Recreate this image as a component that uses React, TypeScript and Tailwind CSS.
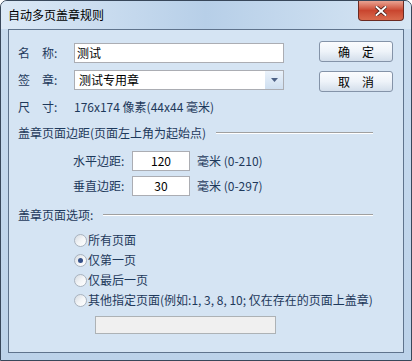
const font = { fontFamily: '"Noto Sans CJK SC", "Liberation Sans", sans-serif' };

function Radio({ label, checked }: { label: string; checked?: boolean }) {
  return (
    <div className="flex items-center h-[20px]">
      <span className="w-[13px] h-[13px] rounded-full border border-[#a9b3bf] bg-gradient-to-br from-[#d6dbe1] via-[#f2f4f6] to-[#ffffff] flex items-center justify-center">
        {checked && <span className="w-[5px] h-[5px] rounded-full bg-[#35518a]" />}
      </span>
      <span className="ml-[1px] text-[12px] text-[#1e395b]">{label}</span>
    </div>
  );
}

function Btn({ label }: { label: string }) {
  return (
    <button className="w-[74px] h-[21px] rounded-[3px] border border-[#8493a8] bg-gradient-to-b from-[#fbfcfe] via-[#eef3f9] to-[#d3deeb] text-[12px] text-black tracking-[12px] pl-[12px]">
      {label}
    </button>
  );
}

function Label({ a, b }: { a: string; b: string }) {
  return (
    <span className="w-[56px] flex">
      <span>{a}</span>
      <span className="ml-[12px]">{b}:</span>
    </span>
  );
}

export default function App() {
  return (
    <div style={font} className="w-[412px] h-[361px] bg-white">
      <div className="w-[412px] h-[361px] rounded-t-[7px] border border-[#38475a] bg-gradient-to-b from-[#c9dcef] to-[#bcd2e9] flex flex-col">
        {/* title bar */}
        <div className="h-[28px] flex items-start rounded-t-[6px] bg-gradient-to-r from-[#dce9f6] via-[#b7cfe8] to-[#d7e6f4]">
          <span className="ml-[7px] mt-[5px] text-[12px] text-black">自动多页盖章规则</span>
          <div className="ml-auto mr-[7px] w-[46px] h-[20px] rounded-b-[4px] border border-t-0 border-[#6b2a22] bg-gradient-to-b from-[#e8a292] via-[#c9452f] to-[#d96a4d] flex items-center justify-center">
            <svg width="12" height="10" viewBox="0 0 12 10">
              <path d="M1.5 1 L10.5 9 M10.5 1 L1.5 9" stroke="#3d1510" strokeWidth="3.4" strokeLinecap="square" />
              <path d="M1.5 1 L10.5 9 M10.5 1 L1.5 9" stroke="#ffffff" strokeWidth="2" strokeLinecap="square" />
            </svg>
          </div>
        </div>

        {/* client area */}
        <div className="mx-[7px] h-[324px] border border-[#5f738c] bg-[#d5e4f3] text-[12px] text-[#1e395b]">
          <div className="flex pt-[11px] pl-[9px]">
            <div className="flex flex-col">
              <div className="flex items-center h-[20px] mt-[2px]">
                <Label a="名" b="称" />
                <div className="w-[210px] h-[20px] border border-[#abadb3] bg-white text-black leading-[18px] pl-[2px]">测试</div>
              </div>
              <div className="flex items-center h-[20px] mt-[7px]">
                <Label a="签" b="章" />
                <div className="w-[210px] h-[20px] border border-[#abadb3] bg-white text-black leading-[18px] pl-[4px] flex">
                  <span>测试专用章</span>
                  <span className="ml-auto w-[18px] h-[18px] bg-gradient-to-b from-[#eaf2fb] to-[#cfdff0] flex items-center justify-center">
                    <svg width="7" height="4" viewBox="0 0 7 4">
                      <path d="M0 0 H7 L3.5 4 Z" fill="#4d6185" />
                    </svg>
                  </span>
                </div>
              </div>
              <div className="flex items-center h-[20px] mt-[7px]">
                <Label a="尺" b="寸" />
                <span>176x174 像素(44x44 毫米)</span>
              </div>
            </div>
            <div className="ml-auto mr-[10px] flex flex-col gap-[9px]">
              <Btn label="确定" />
              <Btn label="取消" />
            </div>
          </div>

          <div className="flex items-center h-[20px] mt-[6px] pl-[9px] pr-[30px]">
            <span>盖章页面边距(页面左上角为起始点)</span>
            <span className="ml-[10px] flex-1 h-[2px] border-t border-[#a0a0a0] border-b border-b-white" />
          </div>

          <div className="flex items-center h-[20px] mt-[8px] pl-[64px]">
            <span className="w-[59px]">水平边距:</span>
            <div className="w-[58px] h-[20px] border border-[#abadb3] bg-white text-black text-center leading-[18px]">120</div>
            <span className="ml-[7px]">毫米 (0-210)</span>
          </div>
          <div className="flex items-center h-[20px] mt-[5px] pl-[64px]">
            <span className="w-[59px]">垂直边距:</span>
            <div className="w-[58px] h-[20px] border border-[#abadb3] bg-white text-black text-center leading-[18px]">30</div>
            <span className="ml-[7px]">毫米 (0-297)</span>
          </div>

          <div className="flex items-center h-[20px] mt-[9px] pl-[9px] pr-[30px]">
            <span>盖章页面选项:</span>
            <span className="ml-[10px] flex-1 h-[2px] border-t border-[#a0a0a0] border-b border-b-white" />
          </div>

          <div className="flex flex-col mt-[5px] pl-[65px]">
            <Radio label="所有页面" />
            <Radio label="仅第一页" checked />
            <Radio label="仅最后一页" />
            <Radio label="其他指定页面(例如:1, 3, 8, 10;  仅在存在的页面上盖章)" />
          </div>

          <div className="ml-[86px] mt-[6px] w-[181px] h-[18px] border border-[#adb2b5] bg-[#f0f0f0]" />
        </div>
      </div>
    </div>
  );
}
